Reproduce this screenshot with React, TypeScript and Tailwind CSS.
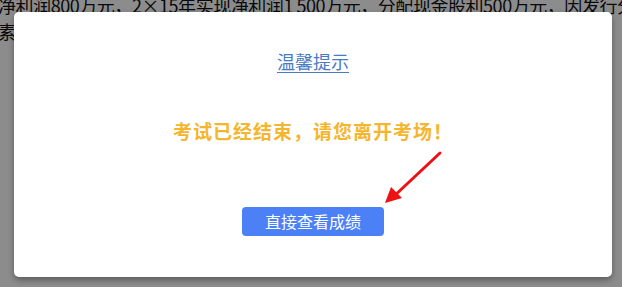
import React from 'react';

const cjk = { fontFamily: '"Noto Sans CJK SC", "Microsoft YaHei", sans-serif' };

export default function App() {
  return (
    <div className="relative h-[287px] w-full overflow-hidden bg-white" style={cjk}>
      {/* page underneath */}
      <div className="-mt-[8px] -ml-[2px] text-[18px] leading-[26px] tracking-[-0.45px] text-[#111] whitespace-nowrap">
        <p>净利润800万元，2×15年实现净利润1 500万元，分配现金股利500万元，因发行分离交易</p>
        <p>素</p>
      </div>

      {/* overlay */}
      <div className="absolute inset-0 bg-black/45" />

      {/* dialog */}
      <div className="absolute left-[14px] top-[12px] w-[598px] h-[265px] rounded-[5px] bg-white shadow-[0_3px_6px_rgba(0,0,0,0.35)] flex flex-col items-center pt-[37px]">
        <h2 className="text-[18px] leading-[24px] text-[#4a7bc2] underline underline-offset-[3px] decoration-1">温馨提示</h2>
        <p className="mt-[45px] text-[19px] leading-[26px] font-bold tracking-[1px] text-[#f5b52e]">考试已经结束，请您离开考场！</p>
        <button className="mt-[63px] w-[142px] h-[29px] rounded-[4px] bg-[#4b80f6] text-white text-[16px] leading-[29px]">
          直接查看成绩
        </button>

        <svg className="absolute left-[366px] top-[136px]" width="70" height="60" viewBox="0 0 70 60">
          <line x1="60" y1="5" x2="12" y2="50" stroke="#ee1111" strokeWidth="3" strokeLinecap="round" />
          <polygon points="5,55 11,39 22,50" fill="#ee1111" />
        </svg>
      </div>
    </div>
  );
}
